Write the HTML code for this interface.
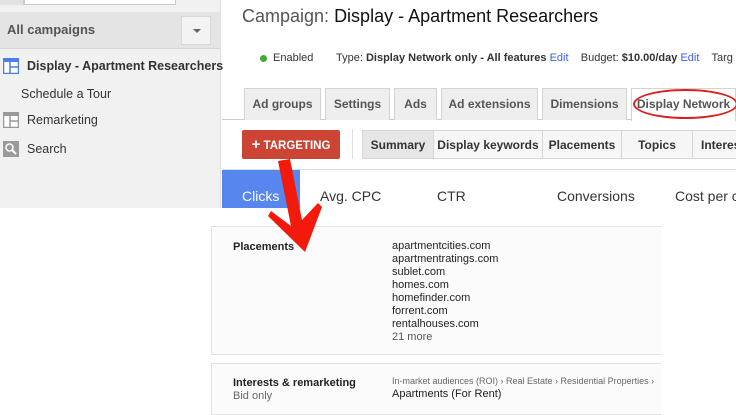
<!DOCTYPE html>
<html><head><meta charset="utf-8"><style>
*{margin:0;padding:0;box-sizing:border-box}
body{width:736px;height:415px;overflow:hidden;background:#fff;font-family:"Liberation Sans",Arial,sans-serif;position:relative;color:#222}
.abs{position:absolute}
.side{left:0;top:0;width:221px;height:208px;background:#f1f1f1;border-right:1px solid #ddd}
.tab{position:absolute;top:88px;height:32px;background:#eee;border:1px solid #d3d3d3;border-bottom:none;font-weight:bold;font-size:12px;color:#555;text-align:center;line-height:31px}
.sub{position:absolute;top:130px;height:29px;border:1px solid #d6d6d6;background:#f6f6f6;font-weight:bold;font-size:12px;color:#333;text-align:center;line-height:28px}
.m{font-size:14px;color:#333;position:absolute;top:188px}
.dom{font-size:11px;line-height:13px;color:#222}
</style></head><body>
<div class="abs side"></div>
<div class="abs" style="left:0;top:0;width:24px;height:5px;background:#e2e2e2;border-right:1px solid #ccc"></div>
<div class="abs" style="left:24px;top:0;width:152px;height:5px;background:#fff;border:1px solid #ccc;border-top:none"></div>
<div class="abs" style="left:0;top:12px;width:221px;height:37px;background:#e4e4e4;border-bottom:1px solid #d6d6d6"></div>
<div class="abs" style="left:7px;top:22px;font-size:13px;font-weight:bold;color:#555">All campaigns</div>
<div class="abs" style="left:181px;top:16px;width:30px;height:29px;background:#f3f3f3;border:1px solid #d8d8d8"></div>
<div class="abs" style="left:193px;top:29px;width:0;height:0;border-left:4px solid transparent;border-right:4px solid transparent;border-top:4px solid #666"></div>
<svg class="abs" style="left:3px;top:58px" width="16" height="16"><rect x="0.5" y="0.5" width="15" height="15" fill="#fff" stroke="#4a7ee8" stroke-width="1.5"/><rect x="1" y="1" width="14" height="3" fill="#4a7ee8"/><line x1="7" y1="4" x2="7" y2="15" stroke="#4a7ee8" stroke-width="1.5"/><line x1="7" y1="9" x2="15" y2="9" stroke="#4a7ee8" stroke-width="1.5"/></svg>
<div class="abs" style="left:27px;top:59px;font-size:12.5px;font-weight:bold;color:#333">Display - Apartment Researchers</div>
<div class="abs" style="left:21px;top:87px;font-size:12.5px;color:#333">Schedule a Tour</div>
<svg class="abs" style="left:3px;top:112px" width="16" height="16"><rect x="0.5" y="0.5" width="15" height="15" fill="#fff" stroke="#999" stroke-width="1.5"/><rect x="1" y="1" width="14" height="3" fill="#999"/><line x1="7" y1="4" x2="7" y2="15" stroke="#999" stroke-width="1.5"/><line x1="7" y1="9" x2="15" y2="9" stroke="#999" stroke-width="1.5"/></svg>
<div class="abs" style="left:27px;top:113px;font-size:12.5px;color:#333">Remarketing</div>
<svg class="abs" style="left:3px;top:141px" width="16" height="16"><rect width="16" height="16" fill="#9a9a9a"/><circle cx="6.5" cy="6.5" r="3.5" fill="none" stroke="#fff" stroke-width="1.5"/><line x1="9" y1="9" x2="13" y2="13" stroke="#fff" stroke-width="2"/></svg>
<div class="abs" style="left:27px;top:142px;font-size:12.5px;color:#333">Search</div>

<div class="abs" style="left:242px;top:6px;font-size:18px;color:#555">Campaign: <span style="color:#111">Display - Apartment Researchers</span></div>
<div class="abs" style="left:260px;top:55px;width:7px;height:7px;border-radius:50%;background:#3cb02d"></div>
<div class="abs" style="left:273px;top:52px;font-size:11px;color:#333;white-space:nowrap">Enabled</div>
<div class="abs" style="left:336px;top:52px;font-size:11px;color:#333;white-space:nowrap">Type: <b>Display Network only - All features</b> <span style="color:#3b5fd6">Edit</span>&nbsp;&nbsp;&nbsp; Budget: <b>$10.00/day</b> <span style="color:#3b5fd6">Edit</span>&nbsp;&nbsp;&nbsp; Targ</div>
<div class="abs" style="left:222px;top:119px;width:514px;height:1px;background:#ccc"></div>
<div class="tab" style="left:244px;width:77px">Ad groups</div>
<div class="tab" style="left:325px;width:65px">Settings</div>
<div class="tab" style="left:394px;width:43px">Ads</div>
<div class="tab" style="left:441px;width:97px">Ad extensions</div>
<div class="tab" style="left:542px;width:85px">Dimensions</div>
<div class="tab" style="left:631px;width:105px;background:#fff;height:33px">Display Network</div>
<div class="abs" style="left:633px;top:89px;width:105px;height:30px;border:2px solid #d8221e;border-radius:50%"></div>
<div class="abs" style="left:242px;top:130px;width:98px;height:29px;background:#cc4433;border-radius:2px;color:#fff;font-weight:bold;font-size:11.5px;line-height:29px;text-align:center"><span style="font-size:15px">+</span> TARGETING</div>
<div class="abs" style="left:352px;top:129px;width:1px;height:30px;background:#e0e0e0"></div>
<div class="sub" style="left:362px;width:72px;background:#e6e6e6">Summary</div>
<div class="sub" style="left:433px;width:110px">Display keywords</div>
<div class="sub" style="left:542px;width:80px">Placements</div>
<div class="sub" style="left:621px;width:72px">Topics</div>
<div class="sub" style="left:692px;width:60px;text-align:left;padding-left:8px">Interes</div>
<div class="abs" style="left:222px;top:169px;width:514px;height:1px;background:#ddd"></div>
<div class="abs" style="left:222px;top:170px;width:78px;height:38px;background:#5686ee"></div>
<div class="m" style="left:242px;color:#fff">Clicks</div>
<div class="m" style="left:320px">Avg. CPC</div>
<div class="m" style="left:437px">CTR</div>
<div class="m" style="left:557px">Conversions</div>
<div class="m" style="left:675px;white-space:nowrap">Cost per c</div>

<div class="abs" style="left:211px;top:226px;width:450px;height:129px;background:#fbfbfb;border:1px solid #e3e3e3;border-right:none"></div>
<div class="abs" style="left:233px;top:241px;font-size:11px;font-weight:bold">Placements</div>
<div class="abs dom" style="left:392px;top:240px">apartmentcities.com<br>apartmentratings.com<br>sublet.com<br>homes.com<br>homefinder.com<br>forrent.com<br>rentalhouses.com<br><span style="color:#555">21 more</span></div>
<div class="abs" style="left:211px;top:363px;width:450px;height:52px;background:#fbfbfb;border:1px solid #e3e3e3;border-right:none"></div>
<div class="abs" style="left:233px;top:377px;font-size:11px;font-weight:bold">Interests &amp; remarketing</div>
<div class="abs" style="left:233px;top:390px;font-size:11px;color:#666">Bid only</div>
<div class="abs" style="left:392px;top:376px;font-size:9px;color:#666;white-space:nowrap">In-market audiences (ROI) › Real Estate › Residential Properties ›</div>
<div class="abs" style="left:392px;top:388px;font-size:11px;color:#222">Apartments (For Rent)</div>

<svg class="abs" style="left:0;top:0" width="736" height="415"><polygon points="278,161 290,159 302,220 318,203 322,207 305,252 268,216 271,211 291,226" fill="#f21a0c"/></svg>
</body></html>
